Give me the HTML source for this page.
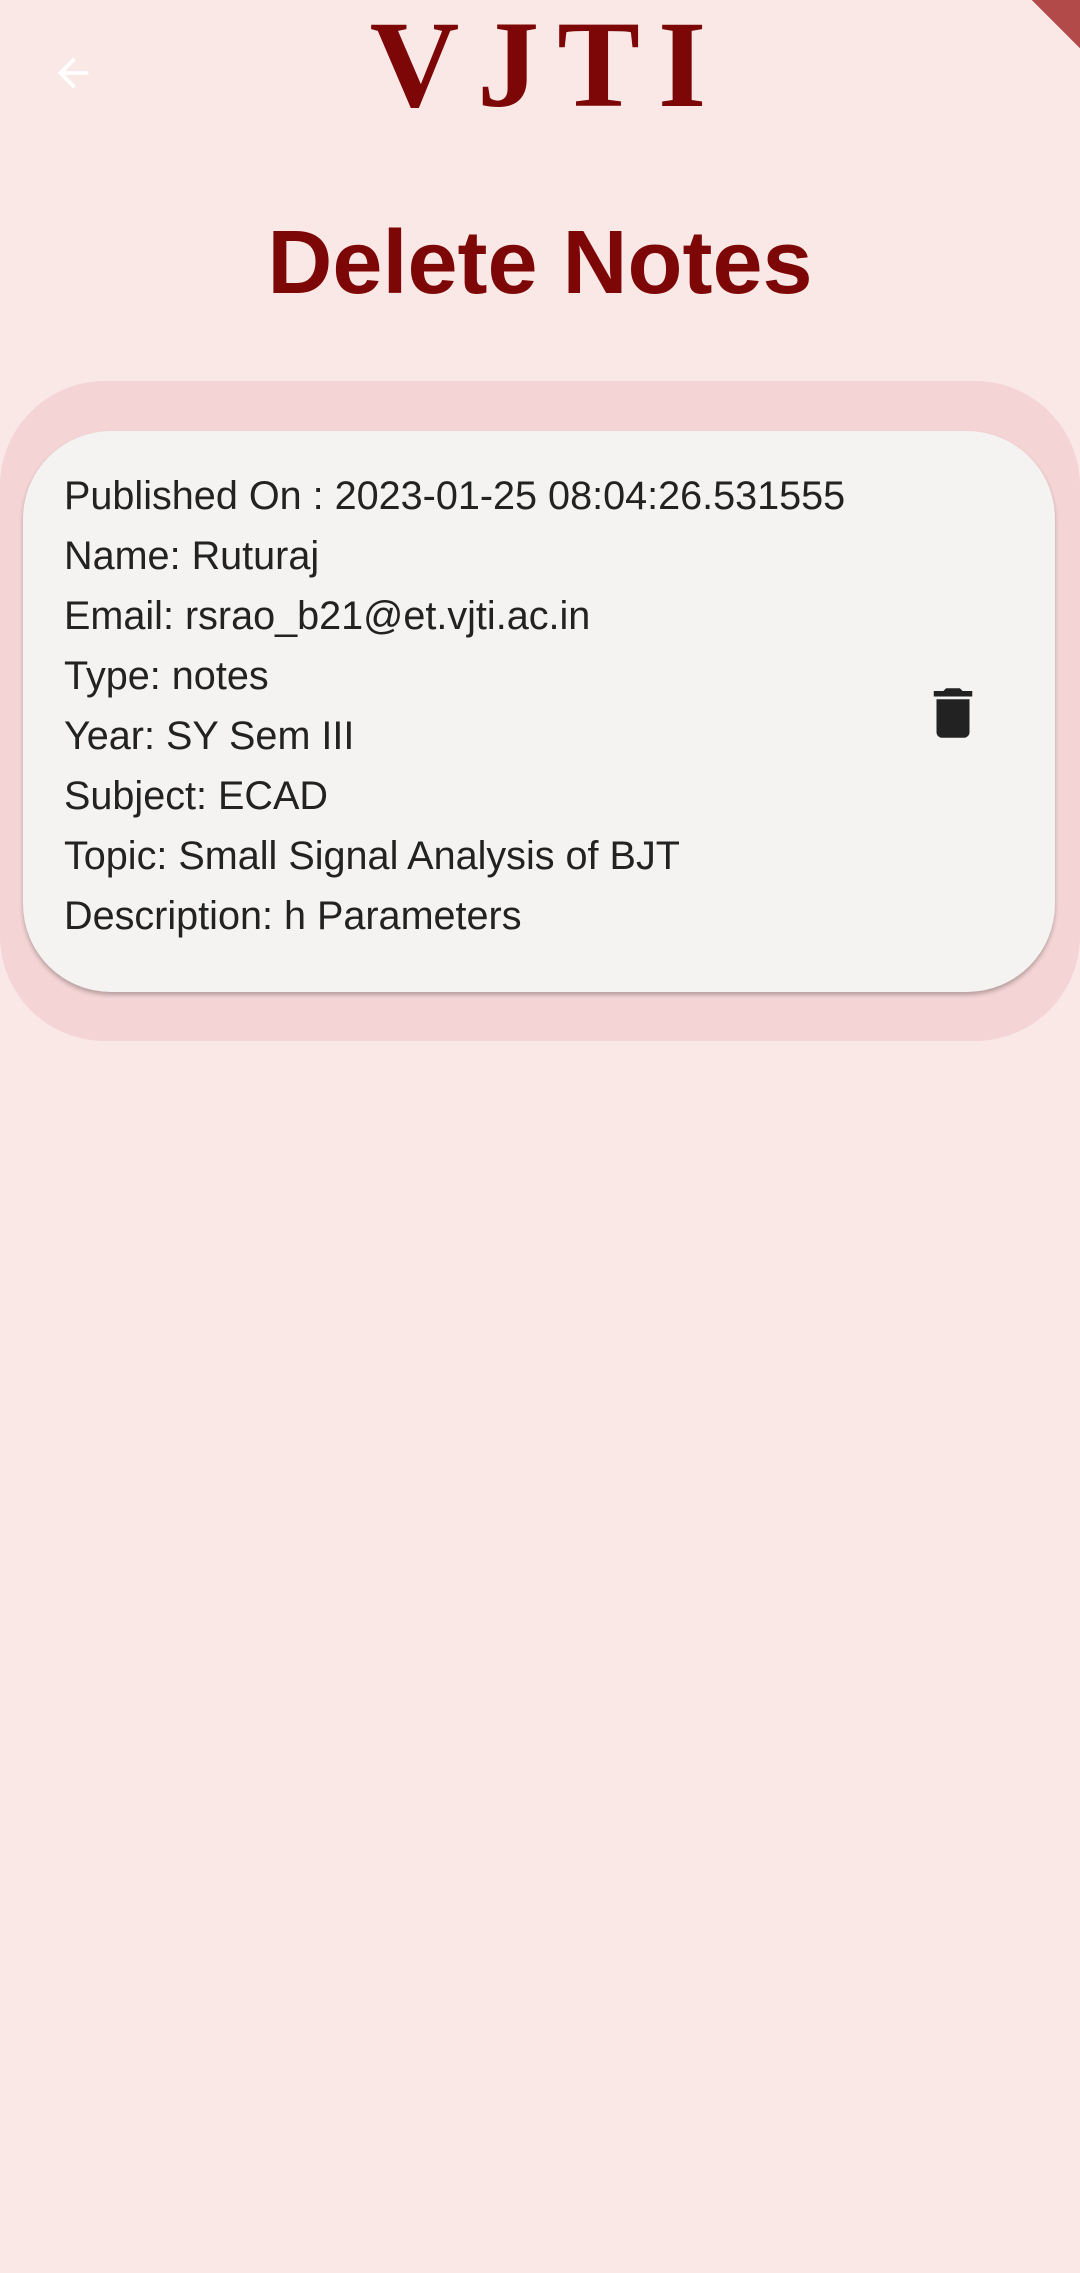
<!DOCTYPE html>
<html><head><meta charset="utf-8"><style>
html,body{margin:0;padding:0}
body{width:1080px;height:2273px;background:#fae8e7;position:relative;overflow:hidden;font-family:"Liberation Sans",sans-serif}
.vjti{position:absolute;left:0;width:1080px;top:-15px;text-align:center;font-family:"Liberation Serif",serif;font-weight:bold;font-size:124px;color:#7d0606;letter-spacing:18px;text-indent:14px;line-height:160px}
.title{position:absolute;left:0;width:1080px;top:208px;text-align:center;font-weight:bold;font-size:90px;color:#7d0606;letter-spacing:0px;line-height:110px}
.outer{position:absolute;left:0;top:381px;width:1080px;height:660px;background:#f4d4d4;border-radius:105px}
.card{position:absolute;left:23px;top:431px;width:1032px;height:561px;background:#f4f3f1;border-radius:88px;box-shadow:0 3px 4px rgba(0,0,0,.25)}
.lines{position:absolute;left:64px;top:466px;font-size:39.6px;color:#222;line-height:60px}
.banner{position:absolute;right:-75px;top:-25px;width:200px;height:40px;background:#b24a4a;transform:rotate(45deg);transform-origin:center}
</style></head><body>
<svg style="position:absolute;left:50px;top:50px" width="46" height="46" viewBox="0 0 24 24"><path d="M20 11H7.83l5.59-5.59L12 4l-8 8 8 8 1.41-1.41L7.83 13H20v-2z" fill="#fff"/></svg>
<div class="vjti">VJTI</div>
<div class="title">Delete Notes</div>
<div class="outer"></div>
<div class="card"></div>
<div class="lines">
Published On : 2023-01-25 08:04:26.531555<br>
Name: Ruturaj<br>
Email: rsrao_b21@et.vjti.ac.in<br>
Type: notes<br>
Year: SY Sem III<br>
Subject: ECAD<br>
Topic: Small Signal Analysis of BJT<br>
Description: h Parameters
</div>
<svg style="position:absolute;left:920px;top:680px" width="66" height="66" viewBox="0 0 24 24"><path d="M6 19c0 1.1.9 2 2 2h8c1.1 0 2-.9 2-2V7H6v12zM19 4h-3.5l-1-1h-5l-1 1H5v2h14V4z" fill="#222"/></svg>
<div class="banner"></div>
</body></html>
